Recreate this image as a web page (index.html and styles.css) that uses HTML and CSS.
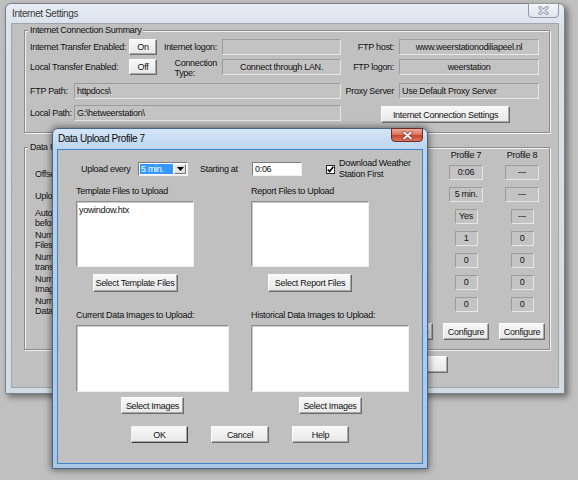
FILE: index.html
```html
<!DOCTYPE html>
<html>
<head>
<meta charset="utf-8">
<title>Internet Settings</title>
<link rel="stylesheet" href="styles.css">
</head>
<body>
<div class="desktop">

  <section class="window main-win">
    <header class="titlebar">
      <span class="title">Internet Settings</span>
      <span class="close-btn inactive">
        <svg width="11" height="9" viewBox="0 0 11 9"><path d="M2 1.5 L9 7.5 M9 1.5 L2 7.5" stroke="#8b96a1" stroke-width="3.2" stroke-linecap="round"/><path d="M2 1.5 L9 7.5 M9 1.5 L2 7.5" stroke="#eef2f6" stroke-width="1.3" stroke-linecap="round"/></svg>
      </span>
    </header>
    <div class="client">
      <fieldset class="group summary">
        <legend>Internet Connection Summary</legend>
        <div class="summary-grid">
          <span class="lbl span2">Internet Transfer Enabled:</span>
          <span class="btn toggle">On</span>
          <span class="lbl r">Internet logon:</span>
          <span class="field"></span>
          <span class="lbl r">FTP host:</span>
          <span class="field center">www.weerstationodiliapeel.nl</span>

          <span class="lbl span2">Local Transfer Enabled:</span>
          <span class="btn toggle">Off</span>
          <span class="lbl r two">Connection<br>Type:</span>
          <span class="field center">Connect through LAN.</span>
          <span class="lbl r">FTP logon:</span>
          <span class="field center">weerstation</span>

          <span class="lbl">FTP Path:</span>
          <span class="field span4">httpdocs\</span>
          <span class="lbl r">Proxy Server</span>
          <span class="field">Use Default Proxy Server</span>

          <span class="lbl">Local Path:</span>
          <span class="field span4">G:\hetweerstation\</span>
          <span class="btn ics">Internet Connection Settings</span>
        </div>
      </fieldset>

      <fieldset class="group profiles">
        <legend>Data Upload Profiles</legend>
        <div class="profile-grid">
          <span></span>
          <span></span><span></span><span></span><span></span><span></span><span></span>
          <span class="ph">Profile 7</span><span class="ph">Profile 8</span>

          <span class="pl">Offset</span>
          <span class="field pv w"></span><span class="field pv w"></span><span class="field pv w"></span><span class="field pv w"></span>
          <span class="field pv w"></span><span class="field pv w"></span><span class="field pv w">0:06</span><span class="field pv w">---</span>

          <span class="pl">Upload</span>
          <span class="field pv w"></span><span class="field pv w"></span><span class="field pv w"></span><span class="field pv w"></span>
          <span class="field pv w"></span><span class="field pv w"></span><span class="field pv w">5 min.</span><span class="field pv w">---</span>

          <span class="pl">Autom<br>before</span>
          <span class="field pv n"></span><span class="field pv n"></span><span class="field pv n"></span><span class="field pv n"></span>
          <span class="field pv n"></span><span class="field pv n"></span><span class="field pv n">Yes</span><span class="field pv n">---</span>

          <span class="pl">Numb<br>Files</span>
          <span class="field pv n"></span><span class="field pv n"></span><span class="field pv n"></span><span class="field pv n"></span>
          <span class="field pv n"></span><span class="field pv n"></span><span class="field pv n">1</span><span class="field pv n">0</span>

          <span class="pl">Numb<br>trans</span>
          <span class="field pv n"></span><span class="field pv n"></span><span class="field pv n"></span><span class="field pv n"></span>
          <span class="field pv n"></span><span class="field pv n"></span><span class="field pv n">0</span><span class="field pv n">0</span>

          <span class="pl">Numb<br>Imag</span>
          <span class="field pv n"></span><span class="field pv n"></span><span class="field pv n"></span><span class="field pv n"></span>
          <span class="field pv n"></span><span class="field pv n"></span><span class="field pv n">0</span><span class="field pv n">0</span>

          <span class="pl">Numb<br>Data</span>
          <span class="field pv n"></span><span class="field pv n"></span><span class="field pv n"></span><span class="field pv n"></span>
          <span class="field pv n"></span><span class="field pv n"></span><span class="field pv n">0</span><span class="field pv n">0</span>

          <span></span>
          <span class="btn cfg"></span><span class="btn cfg"></span><span class="btn cfg"></span><span class="btn cfg"></span>
          <span class="btn cfg"></span><span class="btn cfg">Configure</span><span class="btn cfg">Configure</span><span class="btn cfg">Configure</span>
        </div>
      </fieldset>

      <div class="main-actions">
        <span class="btn"></span>
      </div>
    </div>
  </section>

  <section class="window dialog">
    <header class="titlebar">
      <span class="title">Data Upload Profile 7</span>
      <span class="close-btn active">
        <svg width="11" height="9" viewBox="0 0 11 9"><path d="M2 1.5 L9 7.5 M9 1.5 L2 7.5" stroke="#7a2c20" stroke-width="3.4" stroke-linecap="round" opacity="0.7"/><path d="M2 1.5 L9 7.5 M9 1.5 L2 7.5" stroke="#ffffff" stroke-width="1.8" stroke-linecap="round"/></svg>
      </span>
    </header>
    <div class="client dlg-client">
      <div class="dlg-top">
        <span class="lbl w57">Upload every</span>
        <span class="combo">
          <span class="combo-sel">5 min.</span>
          <span class="combo-arrow"><svg width="7" height="4" viewBox="0 0 7 4"><path d="M0 0 H7 L3.5 4 Z" fill="#000"/></svg></span>
        </span>
        <span class="lbl w52 gap12">Starting at</span>
        <span class="edit">0:06</span>
        <span class="check"><svg width="7" height="7" viewBox="0 0 7 7"><path d="M0.8 3.4 L2.7 5.6 L6.3 0.8" stroke="#000" stroke-width="1.6" fill="none"/></svg></span>
        <span class="lbl chk-lbl">Download Weather<br>Station First</span>
      </div>

      <div class="dlg-grid">
        <div class="cell w118">
          <div class="cap">Template Files to Upload</div>
          <div class="listbox h66"><div class="item">yowindow.htx</div></div>
          <span class="btn b1 w85">Select Template Files</span>
        </div>
        <div class="cell w118">
          <div class="cap">Report Files to Upload</div>
          <div class="listbox h66"></div>
          <span class="btn b1 w84">Select Report Files</span>
        </div>
        <div class="cell w153">
          <div class="cap">Current Data Images to Upload:</div>
          <div class="listbox h67"></div>
          <span class="btn b2 w63">Select Images</span>
        </div>
        <div class="cell w158">
          <div class="cap">Historical Data Images to Upload:</div>
          <div class="listbox h67"></div>
          <span class="btn b2 w63">Select Images</span>
        </div>
      </div>

      <div class="dlg-buttons">
        <span class="btn default w57">OK</span>
        <span class="btn w58">Cancel</span>
        <span class="btn w57">Help</span>
      </div>
    </div>
  </section>

</div>
</body>
</html>
```

FILE: styles.css
```css
* { box-sizing: border-box; }

html, body {
  margin: 0;
  padding: 0;
  background: #c0c0c0;
}

body {
  width: 578px;
  height: 480px;
  overflow: hidden;
  font-family: "Liberation Sans", Arial, sans-serif;
  font-size: 9px;
  letter-spacing: -0.3px;
  color: #111;
}

.desktop {
  position: relative;
  width: 578px;
  height: 480px;
}

/* ---------- windows ---------- */
.window {
  position: absolute;
  display: flex;
  flex-direction: column;
  border: 1px solid #76828e;
  border-radius: 6px 6px 0 0;
}

.main-win {
  left: 5px;
  top: 3px;
  width: 560px;
  height: 391px;
  background: linear-gradient(#e7edf3, #d9e1ea 22px, #d3dce5);
  box-shadow: 3px 3px 6px rgba(0, 0, 0, 0.45);
}

.dialog {
  left: 52px;
  top: 128px;
  width: 376px;
  height: 341px;
  border-color: #48668a;
  background: linear-gradient(#d4e5f6, #bcd4ed 21px, #aac7e6);
  box-shadow: 0 0 7px 1px rgba(0, 0, 0, 0.5);
}

.titlebar {
  flex: none;
  display: flex;
  justify-content: space-between;
  align-items: flex-start;
}

.main-win .titlebar { height: 19px; padding: 0 5px 0 6px; }
.dialog .titlebar { height: 20px; padding: 0 4px 0 5px; }

.title {
  font-size: 10px;
  letter-spacing: -0.4px;
  line-height: 19px;
  color: #3a3a3a;
  white-space: nowrap;
}

.dialog .title { line-height: 20px; color: #0c0c0c; }

.close-btn {
  display: flex;
  align-items: center;
  justify-content: center;
  margin-top: -1px;
  border-radius: 0 0 4px 4px;
}

.close-btn.inactive {
  width: 31px;
  height: 15px;
  border: 1px solid #8f9aa6;
  background: linear-gradient(#f3f6f9, #dfe5eb);
}

.close-btn.active {
  width: 32px;
  height: 14px;
  border: 1px solid #6d2b22;
  background: linear-gradient(#eeab9c, #d8735e 48%, #c4452f 52%, #d97761);
}

.client {
  flex: 1;
  background: #c0c0c0;
}

.main-win .client { margin: 0 5px 5px; border: 1px solid #9ba6b2; }
.dialog .client { margin: 0 4px 4px; border: 1px solid #3c86d0; }

/* ---------- common controls ---------- */
.lbl {
  line-height: 16px;
  white-space: nowrap;
}

.field {
  height: 16px;
  line-height: 14px;
  padding: 0 2px;
  border: 1px solid;
  border-color: #9c9c9c #e6e6e6 #e6e6e6 #9c9c9c;
  background: #c3c3c3;
  white-space: nowrap;
  overflow: hidden;
}

.center { text-align: center; }

.btn {
  display: flex;
  align-items: center;
  justify-content: center;
  height: 17px;
  border: 1px solid;
  border-color: #fbfbfb #6b6b6b #6b6b6b #fbfbfb;
  background: linear-gradient(#f8f8f8, #e7e7e7);
  box-shadow: inset -1px -1px 0 #a8a8a8;
  white-space: nowrap;
  color: #111;
}

.btn.default { border-color: #f0f0f0 #3e3e3e #3e3e3e #f0f0f0; }

/* ---------- group boxes ---------- */
.group {
  margin: 0 8px 0 12px;
  padding: 0 0 9px;
  min-width: 0;
  border: 1px solid #8a8a8a;
  box-shadow: inset 1px 1px 0 #f2f2f2, 1px 1px 0 #f2f2f2;
}

.group legend {
  margin-left: 3px;
  padding: 0 2px;
  line-height: 12px;
  background: #c0c0c0;
  white-space: nowrap;
}

.summary-grid {
  display: grid;
  grid-template-columns: 44px 55px 28px 65px 119px 58px 140px;
  grid-template-rows: 20px 24px 22px 18px;
  align-items: start;
  margin: 3px 0 0 5px;
}

.span2 { grid-column: span 2; }
.span4 { grid-column: span 4; }
.r { justify-self: end; padding-right: 5px; }

.two {
  line-height: 10px;
  margin-top: -1px;
  text-align: left;
}

.toggle { height: 16px; }

.ics {
  grid-column: span 2;
  justify-self: start;
  width: 129px;
  margin: 1px 0 0 40px;
}

.profiles {
  margin-top: 8px;
  padding-bottom: 6px;
}

.profile-grid {
  display: grid;
  grid-template-columns: 67px repeat(8, 56px);
  grid-template-rows: 12px repeat(7, 22px) 26px;
  margin: -2px 0 0 10px;
}

.ph {
  text-align: center;
  line-height: 8px;
  white-space: nowrap;
}

.pl {
  align-self: center;
  line-height: 10px;
  white-space: nowrap;
}

.pv {
  justify-self: center;
  align-self: start;
  margin-top: 2px;
  height: 15px;
  line-height: 13px;
  padding: 0;
  text-align: center;
}

.pv.w { width: 34px; }
.pv.n { width: 23px; }

.cfg {
  justify-self: center;
  align-self: start;
  width: 46px;
  margin-top: 6px;
}

.main-actions {
  display: flex;
  justify-content: flex-end;
  padding-right: 110px;
  margin-top: 6px;
}

.main-actions .btn { width: 76px; }

/* ---------- dialog ---------- */
.dlg-client { padding-top: 12px; }

.dlg-top {
  display: flex;
  align-items: center;
  height: 14px;
  padding-left: 23px;
}

.w57 { width: 57px; }
.w52 { width: 52px; }
.gap12 { margin-left: 12px; }

.combo {
  display: flex;
  width: 50px;
  height: 14px;
  padding: 1px;
  border: 1px solid;
  border-color: #7b7b7b #efefef #efefef #7b7b7b;
  background: #fff;
}

.combo-sel {
  flex: 1;
  margin-right: 1px;
  padding-left: 1px;
  line-height: 10px;
  background: #3399ff;
  color: #fff;
}

.combo-arrow {
  display: flex;
  align-items: center;
  justify-content: center;
  width: 12px;
  border: 1px solid;
  border-color: #fbfbfb #707070 #707070 #fbfbfb;
  background: #e2e2e2;
}

.edit {
  width: 50px;
  height: 14px;
  line-height: 12px;
  padding-left: 2px;
  border: 1px solid;
  border-color: #7b7b7b #efefef #efefef #7b7b7b;
  background: #fff;
}

.check {
  display: flex;
  align-items: center;
  justify-content: center;
  width: 9px;
  height: 9px;
  margin-left: 24px;
  border: 1px solid #2a2a2a;
  background: #fff;
}

.chk-lbl {
  margin-left: 4px;
  line-height: 11px;
}

.dlg-grid {
  display: grid;
  grid-template-columns: 175px 1fr;
  row-gap: 17px;
  margin-top: 9px;
  padding-left: 18px;
}

.cell {
  display: flex;
  flex-direction: column;
  align-items: center;
}

.w118 { width: 118px; }
.w153 { width: 153px; }
.w158 { width: 158px; }

.cap {
  align-self: flex-start;
  line-height: 12px;
  margin-bottom: 4px;
  white-space: nowrap;
}

.listbox {
  align-self: stretch;
  padding: 2px 1px;
  border: 1px solid;
  border-color: #8e8e8e #efefef #efefef #8e8e8e;
  box-shadow: inset 1px 1px 0 #c9c9c9;
  background: #fff;
}

.item { line-height: 12px; padding-left: 1px; }

.h66 { height: 66px; }
.h67 { height: 67px; }

.b1 { margin-top: 7px; height: 18px; }
.b2 { margin-top: 5px; }

.w85 { width: 85px; }
.w84 { width: 84px; }
.w63 { width: 63px; }
.w58 { width: 58px; }

.dlg-buttons {
  display: flex;
  justify-content: center;
  gap: 23px;
  margin-top: 12px;
}
```
